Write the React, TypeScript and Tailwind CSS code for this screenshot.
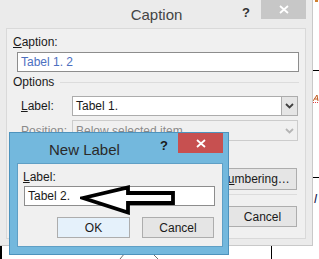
import React from 'react';

const font = { fontFamily: '"Liberation Sans", Arial, sans-serif' };

function Chevron({ color = '#404040' }: { color?: string }) {
  return (
    <svg width="9" height="6" viewBox="0 0 9 6">
      <path d="M1 1 L4.5 4.5 L8 1" fill="none" stroke={color} strokeWidth="1.8" />
    </svg>
  );
}

function Btn({ children, className = '' }: { children: React.ReactNode; className?: string }) {
  return (
    <div
      className={`flex items-center justify-center border border-[#adadad] bg-[#e5e5e5] text-[12px] text-[#1a1a1a] ${className}`}
    >
      {children}
    </div>
  );
}

export default function App() {
  return (
    <div className="relative w-[319px] h-[259px] overflow-hidden bg-white" style={font}>
      {/* document bits behind the dialogs */}
      <div className="absolute left-[313px] top-[70px] w-[6px] h-[1px] bg-black" />
      <div className="absolute left-[313px] top-[177px] w-[6px] h-[1px] bg-black" />
      <div className="absolute left-[315px] top-[0px] w-[3px] h-[2px] bg-[#d08030]" />
      <svg className="absolute left-[313px] top-[94px]" width="6" height="9" viewBox="0 0 6 9">
        <path d="M0 7 L4 1 L5 7 M1.5 5 L5 5" stroke="#c05a20" strokeWidth="1" fill="none" />
        <path d="M0 8.5 L6 8.5" stroke="#e04040" strokeWidth="1" strokeDasharray="1 1" />
      </svg>
      <div className="absolute left-[314px] top-[192px] text-[13px] italic leading-none text-[#1a1a50]">l</div>
      <div className="absolute left-[271px] top-[245px] w-[1px] h-[14px] bg-black" />
      <div className="absolute left-0 top-[246px] w-[2px] h-[13px] bg-black" />
      <svg className="absolute left-[118px] top-[252px]" width="45" height="7" viewBox="0 0 45 7">
        <path d="M2 7 L7 1 M34 1 L40 7" stroke="#707070" strokeWidth="1" fill="none" />
      </svg>

      {/* Caption window */}
      <div className="absolute left-0 top-0 w-[313px] h-[246px] bg-[#ebebeb] border-r border-b border-[#c9c9c9] flex flex-col">
        <div className="relative h-[28px] flex items-center justify-center">
          <span className="text-[15px] text-[#444] pl-[1px] pt-[2px]">Caption</span>
          <span className="absolute left-[242px] top-[3px] text-[13px] font-bold text-[#333]">?</span>
          <div className="absolute left-[261px] top-0 w-[45px] h-[19px] bg-[#c7c7c7] flex items-center justify-center">
            <svg width="10" height="9" viewBox="0 0 10 9">
              <path d="M1 1 L9 8 M9 1 L1 8" stroke="white" strokeWidth="1.8" />
            </svg>
          </div>
        </div>
        <div className="mx-[6px] h-[211px] border border-[#d9d9d9] bg-[#f0f0f0] flex flex-col text-[12px] text-[#1a1a1a]">
          <div className="h-[14px] mt-[6px] ml-[6px] leading-[14px]">
            <span className="underline">C</span>aption:
          </div>
          <div className="mt-[3px] ml-[10px] w-[282px] h-[20px] border border-[#8d8d8d] bg-white flex items-center pl-[3px] text-[#4c6fbf]">
            Tabel 1. 2
          </div>
          <div className="mt-[3px] h-[14px] flex items-center ml-[6px] mr-[6px]">
            <span>Options</span>
            <div className="flex-1 ml-[6px] h-[1px] bg-[#dcdcdc]" />
          </div>
          <div className="mt-[7px] flex items-center">
            <span className="w-[65px] pl-[14px]">
              <span className="underline">L</span>abel:
            </span>
            <div className="w-[226px] h-[20px] border border-[#acacac] bg-white flex items-center">
              <span className="flex-1 pl-[3px]">Tabel 1.</span>
              <div className="w-[16px] h-full bg-[#e5e5e5] border-l border-[#acacac] flex items-center justify-center">
                <Chevron />
              </div>
            </div>
          </div>
          <div className="mt-[4px] flex items-center text-[#8a8a8a]">
            <span className="w-[65px] pl-[14px]">Position:</span>
            <div className="w-[226px] h-[21px] border border-[#cccccc] bg-[#f0f0f0] flex items-center">
              <span className="flex-1 pl-[3px]">Below selected item</span>
              <div className="w-[16px] h-full flex items-center justify-center">
                <Chevron color="#b5b5b5" />
              </div>
            </div>
          </div>
          <div className="mt-[27px] flex justify-end mr-[8px]">
            <Btn className="w-[96px] h-[22px] pl-[11px]">
              N<span className="underline">u</span>mbering…
            </Btn>
          </div>
          <div className="mt-[4px] ml-[60px] mr-[8px] h-[1px] bg-[#dcdcdc]" />
          <div className="mt-[11px] flex justify-end mr-[8px]">
            <Btn className="w-[69px] h-[21px]">Cancel</Btn>
          </div>
        </div>
      </div>

      {/* New Label window */}
      <div className="absolute left-[9px] top-[132px] w-[220px] h-[123px] bg-[#73b8dd] border border-[#4d93bd] flex flex-col">
        <div className="relative h-[30px]">
          <span className="absolute left-[39px] top-[6px] text-[15px] text-[#2a2a2a]">New Label</span>
          <span className="absolute left-[150px] top-[3px] text-[13px] font-bold text-[#1a1a1a]">?</span>
          <div className="absolute left-[168px] top-0 w-[45px] h-[20px] bg-[#c75050] flex items-center justify-center">
            <svg width="10" height="9" viewBox="0 0 10 9">
              <path d="M1 1 L9 8 M9 1 L1 8" stroke="white" strokeWidth="1.8" />
            </svg>
          </div>
        </div>
        <div className="relative ml-[7px] w-[206px] h-[84px] bg-[#f0f0f0] border border-[#5f9fc5] flex flex-col text-[12px] text-[#1a1a1a]">
          <div className="mt-[6px] ml-[5px] h-[14px] leading-[14px]">
            <span className="underline">L</span>abel:
          </div>
          <div className="mt-[2px] ml-[6px] w-[191px] h-[20px] border border-[#8d8d8d] bg-white flex items-center pl-[3px]">
            Tabel 2.
          </div>
          <div className="mt-[11px] flex">
            <Btn className="ml-[39px] w-[73px] h-[21px] border-[#3c8ad8] bg-[#e5f1fb]">OK</Btn>
            <Btn className="ml-[12px] w-[72px] h-[21px]">Cancel</Btn>
          </div>
        </div>
      </div>

      {/* arrow */}
      <svg className="absolute left-[80px] top-[185px]" width="96" height="30" viewBox="0 0 96 30">
        <path
          d="M3 13 L48 2.5 L48 8 L93 8 L93 18 L48 18 L48 27.5 Z"
          fill="white"
          stroke="black"
          strokeWidth="3.8"
          strokeLinejoin="miter"
        />
      </svg>
    </div>
  );
}
